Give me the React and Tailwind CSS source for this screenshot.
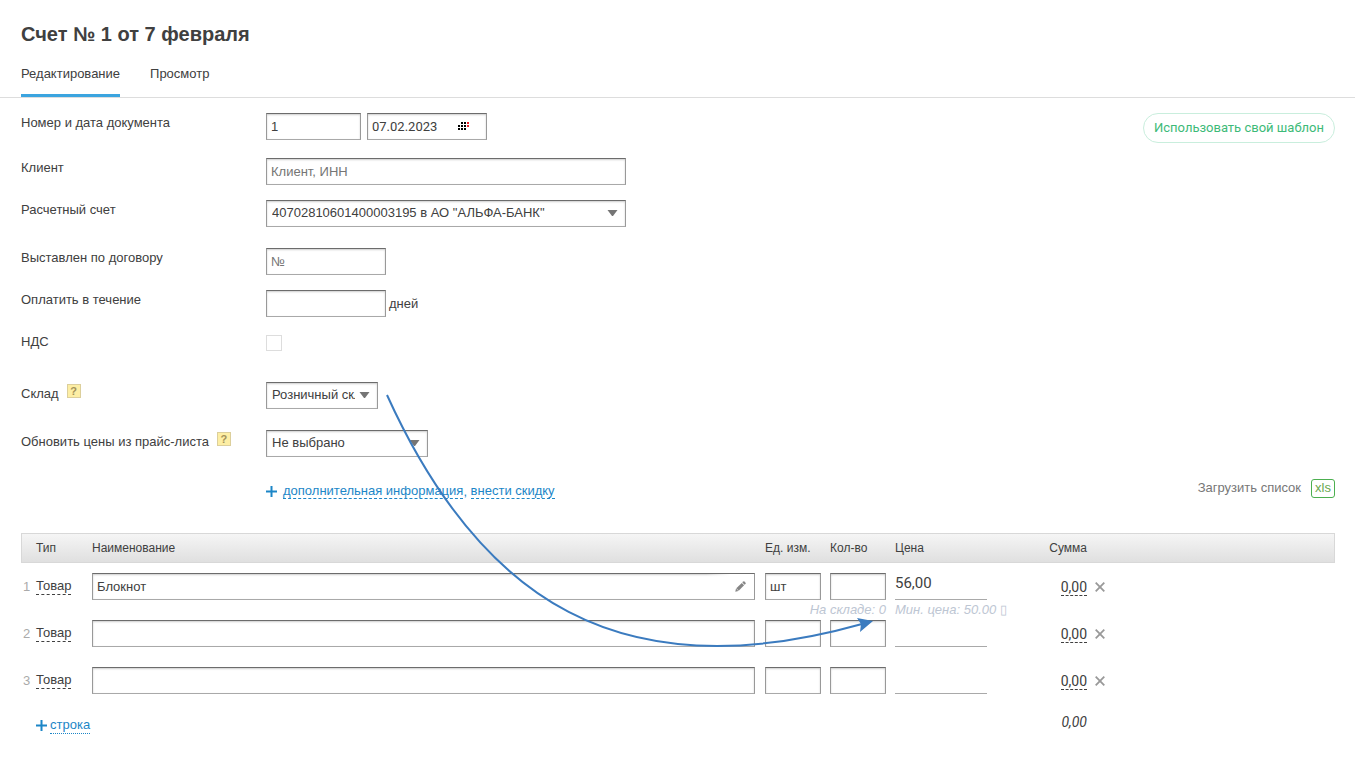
import { useState } from 'react'

const ITEMS = [
  { id: 1, name: 'Блокнот', unit: 'шт', qty: '', price: '56,00', stock: 'На складе: 0', minPrice: 'Мин. цена: 50.00' },
  { id: 2, name: '', unit: '', qty: '', price: '' },
  { id: 3, name: '', unit: '', qty: '', price: '' },
]

const FIELD =
  'block h-[27px] border border-[#999] border-t-[#6c6c6c] border-b-[#a9a9a9] bg-white px-1 text-[13px] leading-[17px] text-[#404040] shadow-[inset_0_1px_2px_rgba(0,0,0,0.2)] placeholder:text-[#757575] focus:outline-none'

function Label({ id, children }) {
  return (
    <label htmlFor={id} className="w-[245px] shrink-0 leading-5">
      {children}
    </label>
  )
}

function Help({ text }) {
  return (
    <button
      type="button"
      aria-label={text}
      className="ml-2 inline-block size-[14px] border border-[#dccf9c] bg-[#fdeea4] text-center align-[3px] text-[11px] leading-3 font-bold text-[#a3925a]"
    >
      ?
    </button>
  )
}

function Select({ id, width, children }) {
  return (
    <div className={`relative ${width}`}>
      <select id={id} className={`${FIELD} w-full appearance-none overflow-hidden pr-[22px] pb-[3px] pl-[5px]`}>
        {children}
      </select>
      <svg className="pointer-events-none absolute top-[10px] right-2 h-[6px] w-[11px]" viewBox="0 0 11 6" fill="#757575">
        <path d="M0.5 0h10L6 6h-1z" />
      </svg>
    </div>
  )
}

function Plus() {
  return (
    <svg className="inline-block size-[11px] shrink-0" viewBox="0 0 11 11" fill="#1c86c7">
      <path d="M0 4.5h4.5V0h2v4.5H11v2H6.5V11h-2V6.5H0z" />
    </svg>
  )
}

function ItemRow({ item }) {
  return (
    <tr className="h-[47px] align-top">
      <td className="pt-1 pl-[2px] text-[#aaa]">{item.id}</td>
      <td className="pt-[3px]">
        <button type="button" className="border-b border-dashed border-[#404040] leading-[17px]">
          Товар
        </button>
      </td>
      <td className="pr-[10px]">
        <div className="relative">
          <input aria-label="Наименование" defaultValue={item.name} className={`${FIELD} w-full`} />
          {item.name && (
            <button
              type="button"
              aria-label="Изменить товар"
              className="absolute top-px right-px flex h-[25px] w-12 items-center justify-end bg-linear-to-r from-transparent to-white to-50% pr-2"
            >
              <svg className="size-[11px]" viewBox="0 0 11 11" fill="#858585">
                <path d="M0.3 10.7L1 7.6 3.4 10z" />
                <path d="M1.3 7.3L6.8 1.9 9.1 4.2 3.7 9.7z" />
                <path d="M7.3 1.4L8.3 0.4Q8.8 0 9.3 0.4L10.6 1.7Q11 2.2 10.6 2.7L9.6 3.7z" />
              </svg>
            </button>
          )}
        </div>
      </td>
      <td className="pr-[9px]">
        <input aria-label="Единица измерения" defaultValue={item.unit} className={`${FIELD} w-full`} />
      </td>
      <td className="pr-[9px]">
        <input aria-label="Количество" defaultValue={item.qty} className={`${FIELD} w-full`} />
        <div className="flex justify-end text-[13px] leading-5 whitespace-nowrap text-[#bdc6d3] italic">{item.stock}</div>
      </td>
      <td>
        <input
          aria-label="Цена"
          defaultValue={item.price}
          className="block h-[27px] w-[92px] border-b border-[#a9a9a9] pb-[6px] font-[Roboto,sans-serif] text-[15px] focus:outline-none"
        />
        {item.minPrice && (
          <div className="text-[13px] leading-5 whitespace-nowrap text-[#bdc6d3]">
            <span className="italic">{item.minPrice}</span> ▯
          </div>
        )}
      </td>
      <td className="pt-[5px] pr-2 text-right">
        <button type="button" className="border-b border-dashed border-[#404040] font-[Roboto,sans-serif] text-sm leading-4">
          0,00
        </button>
      </td>
      <td className="pt-[9px]">
        <button type="button" aria-label="Удалить строку" className="block">
          <svg className="size-[10px]" viewBox="0 0 10 10" stroke="#999" strokeWidth="1.8">
            <path d="M0.7 0.7L9.3 9.3M9.3 0.7L0.7 9.3" />
          </svg>
        </button>
      </td>
    </tr>
  )
}

export default function App() {
  const [date, setDate] = useState('07.02.2023')

  return (
    <div className="relative bg-white pb-10 font-['Liberation_Sans',Arial,sans-serif] text-[13px] leading-5 text-[#404040]">
      <header className="border-b border-[#ddd] pt-5 pl-[21px]">
        <h1 className="text-xl leading-7 font-bold">Счет № 1 от 7 февраля</h1>
        <nav className="mt-4 flex gap-[30px]">
          <a href="#edit" className="border-b-3 border-[#3ba4df] pb-[10px]">
            Редактирование
          </a>
          <a href="#view">Просмотр</a>
        </nav>
      </header>

      <main className="pt-[15px] pr-5 pl-[21px]">
        <div className="flex items-start justify-between">
          <div className="flex flex-col items-start">
            <div className="mb-[18px] flex">
              <Label id="number">Номер и дата документа</Label>
              <input id="number" defaultValue="1" className={`${FIELD} w-[95px]`} />
              <div className="relative ml-[6px]">
                <input
                  aria-label="Дата документа"
                  value={date}
                  onChange={(e) => setDate(e.target.value)}
                  className={`${FIELD} w-[120px] font-[Roboto,sans-serif]`}
                />
                <button type="button" aria-label="Календарь" className="absolute top-[9px] right-[18px]">
                  <svg className="h-2 w-[11px]" viewBox="0 0 11 8" shapeRendering="crispEdges">
                    <path
                      fill="#000"
                      d="M3 0h2v2h-2zM6 0h2v2h-2zM0 3h2v2h-2zM3 3h2v2h-2zM6 3h2v2h-2zM0 6h2v2h-2zM3 6h2v2h-2zM6 6h2v2h-2z"
                    />
                    <path fill="#e8202a" d="M9 0h2v2h-2zM9 3h2v2h-2z" />
                  </svg>
                </button>
              </div>
            </div>
            <div className="mb-[15px] flex">
              <Label id="client">Клиент</Label>
              <input id="client" placeholder="Клиент, ИНН" className={`${FIELD} w-[360px]`} />
            </div>
            <div className="mb-[21px] flex">
              <Label id="account">Расчетный счет</Label>
              <Select id="account" width="w-[360px]">
                <option>40702810601400003195 в АО "АЛЬФА-БАНК"</option>
              </Select>
            </div>
            <div className="mb-[15px] flex">
              <Label id="contract">Выставлен по договору</Label>
              <input id="contract" placeholder="№" className={`${FIELD} w-[120px]`} />
            </div>
            <div className="mb-[15px] flex">
              <Label id="days">Оплатить в течение</Label>
              <input id="days" className={`${FIELD} w-[120px]`} />
              <span className="pt-1 pl-[3px]">дней</span>
            </div>
            <div className="mb-[30px] flex">
              <Label id="vat">НДС</Label>
              <input id="vat" type="checkbox" className="mt-[3px] size-4 appearance-none border border-[#ddd] bg-white checked:bg-[#3ba4df]" />
            </div>
            <div className="mb-[21px] flex">
              <div className="w-[245px] pt-[2px]">
                <label htmlFor="store">Склад</label>
                <Help text="Справка о складе" />
              </div>
              <Select id="store" width="w-[112px]">
                <option>Розничный склад</option>
              </Select>
            </div>
            <div className="mb-[26px] flex">
              <div className="w-[245px] pt-[2px]">
                <label htmlFor="prices">Обновить цены из прайс-листа</label>
                <Help text="Справка о прайс-листе" />
              </div>
              <Select id="prices" width="w-[162px]">
                <option>Не выбрано</option>
              </Select>
            </div>
          </div>
          <button type="button" className="h-[30px] rounded-full border border-[#c9eedd] px-[10px] font-[Roboto,sans-serif] text-[13px] text-[#3dba78]">
            Использовать свой шаблон
          </button>
        </div>

        <div className="flex items-start justify-between">
          <div className="flex items-center pl-[245px] leading-[15px] text-[#1c86c7]">
            <Plus />
            <a href="#more" className="ml-[6px] border-b border-dashed">
              дополнительная информация
            </a>
            <span>,&nbsp;</span>
            <a href="#discount" className="border-b border-dashed">
              внести скидку
            </a>
          </div>
          <div className="-mt-[5px] flex items-center gap-[10px] text-[#777]">
            <span>Загрузить список</span>
            <button type="button" className="h-[19px] w-6 rounded-[3px] border border-[#4caf50] leading-4 text-[#6aa84f]">
              xls
            </button>
          </div>
        </div>

        <table className="mt-[34px] w-full table-fixed border-separate border-spacing-0">
          <colgroup>
            <col className="w-[15px]" />
            <col className="w-[56px]" />
            <col />
            <col className="w-[65px]" />
            <col className="w-[65px]" />
            <col className="w-[100px]" />
            <col className="w-[100px]" />
            <col className="w-[240px]" />
          </colgroup>
          <thead>
            <tr className="h-[30px] bg-linear-to-b from-[#f6f6f6] to-[#dfdfdf] text-left text-xs">
              <th className="border-y border-l border-[#d8d8d8]" />
              <th className="border-y border-[#d8d8d8] font-normal">Тип</th>
              <th className="border-y border-[#d8d8d8] font-normal">Наименование</th>
              <th className="border-y border-[#d8d8d8] font-normal">Ед. изм.</th>
              <th className="border-y border-[#d8d8d8] font-normal">Кол-во</th>
              <th className="border-y border-[#d8d8d8] font-normal">Цена</th>
              <th className="border-y border-[#d8d8d8] pr-2 text-right font-normal">Сумма</th>
              <th className="border-y border-r border-[#d8d8d8]" />
            </tr>
          </thead>
          <tbody>
            <tr className="h-[10px]">
              <td colSpan={8} />
            </tr>
            {ITEMS.map((item) => (
              <ItemRow key={item.id} item={item} />
            ))}
          </tbody>
          <tfoot>
            <tr className="align-top">
              <td />
              <td colSpan={5} className="pt-[3px]">
                <button type="button" className="flex items-center gap-[3px] text-[#1c86c7]">
                  <Plus />
                  <span className="border-b border-dotted leading-4">строка</span>
                </button>
              </td>
              <td className="pr-2 text-right font-[Roboto,sans-serif] text-sm leading-4 italic">0,00</td>
              <td />
            </tr>
          </tfoot>
        </table>
      </main>

      {/* arrow from the store select to the stock hint */}
      <svg className="pointer-events-none absolute top-0 left-0 h-[700px] w-[900px]" viewBox="0 0 900 700">
        <path d="M387 395C480 600 620 692 862 624" fill="none" stroke="#3b7bbf" strokeWidth="2" />
        <path d="M873 621L857 618L861 624L860 632Z" fill="#3b7bbf" />
      </svg>
    </div>
  )
}
